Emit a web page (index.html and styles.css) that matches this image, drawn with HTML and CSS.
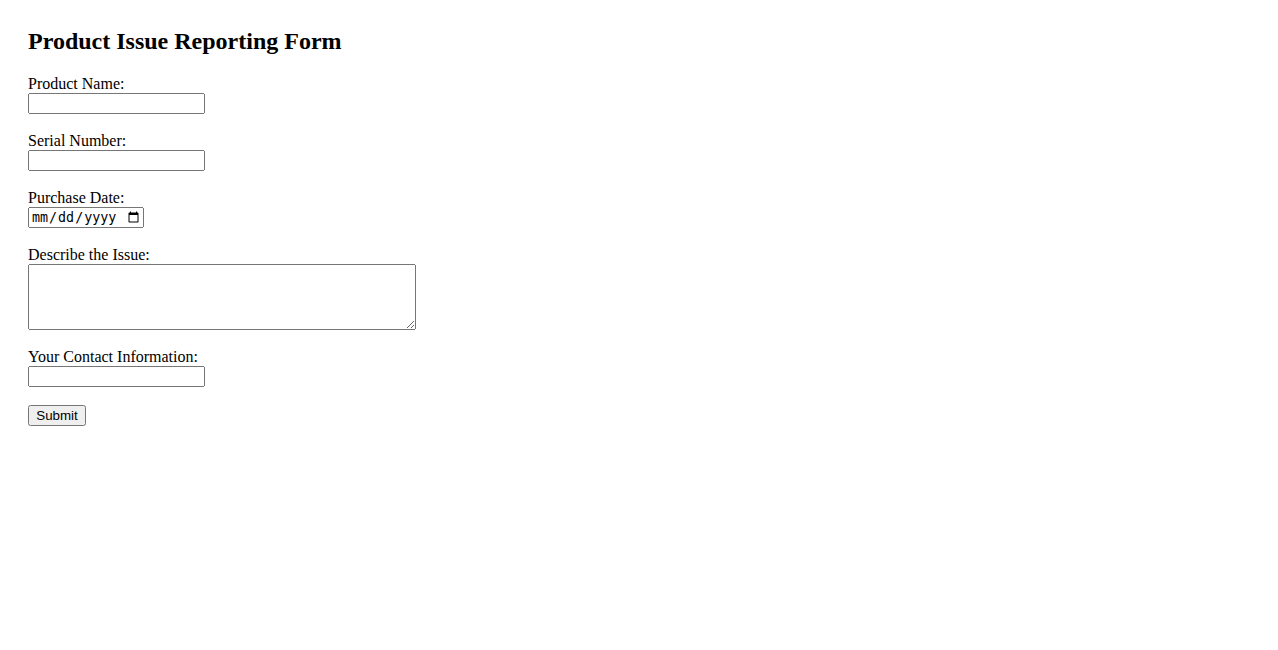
FILE: index.html
```html
<!DOCTYPE html>
<html>
<head>
<meta charset="utf-8">
<title>Product Issue Reporting Form</title>
<link rel="stylesheet" href="styles.css">
</head>
<body>
<div class="page">
  <h2 class="title">Product Issue Reporting Form</h2>
  <form class="form">
    <label for="pname">Product Name:</label><br>
    <input class="text" type="text" id="pname" name="pname"><br><br>
    <label for="serial">Serial Number:</label><br>
    <input class="text" type="text" id="serial" name="serial"><br><br>
    <label for="pdate">Purchase Date:</label><br>
    <input class="date" type="date" id="pdate" name="pdate"><br><br>
    <label for="issue">Describe the Issue:</label><br>
    <textarea class="issue" id="issue" name="issue" rows="4" cols="50"></textarea><br><br>
    <label for="contact">Your Contact Information:</label><br>
    <input class="text" type="text" id="contact" name="contact"><br><br>
    <input class="submit" type="submit" value="Submit">
  </form>
</div>
</body>
</html>
```

FILE: styles.css
```css
body {
  margin: 0;
  font-family: "Liberation Serif", "Times New Roman", serif;
  font-size: 16px;
  color: #000;
  background: #fff;
}
.page {
  padding: 28px;
}
.title {
  margin: 0 0 20px;
  font-size: 24px;
  font-weight: bold;
}
.form {
  margin: 0;
}
.text {
  width: 177px;
  height: 21px;
  box-sizing: border-box;
  margin: 0;
}
.date {
  width: 116px;
  height: 21px;
  box-sizing: border-box;
  margin: 0;
}
.issue {
  width: 388px;
  height: 66px;
  box-sizing: border-box;
  margin: 0;
  vertical-align: bottom;
}
.submit {
  width: 58px;
  height: 21px;
  box-sizing: border-box;
  margin: 0;
  font-family: "Liberation Sans", Arial, sans-serif;
  font-size: 13.33px;
}
```
